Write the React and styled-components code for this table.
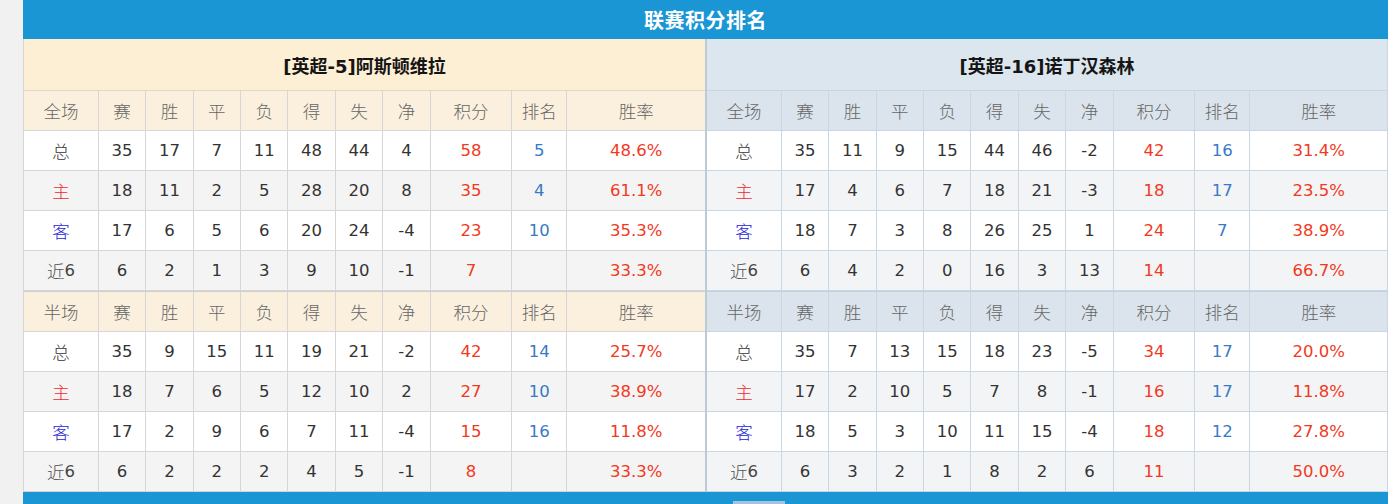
import React from "react";
import styled, { createGlobalStyle, css } from "styled-components";

const GlobalStyle = createGlobalStyle`
  html, body { margin: 0; padding: 0; }
  body {
    background: #f1f1f1;
    font-family: "DejaVu Sans", "Noto Sans CJK SC", sans-serif;
    color: #333;
  }
`;

const themes = {
  home: {
    team: "#fdefd4",
    teamLine: "#e2d8c6",
    head: "#fbf0de",
    stripe: "#f4f4f4",
    line: "#d6d6d6",
    sep: "#cfcfcf",
  },
  away: {
    team: "#dce6ee",
    teamLine: "#c9d5df",
    head: "#dbe4ec",
    stripe: "#f3f4f6",
    line: "#c8d7e3",
    sep: "#c3d0dc",
  },
};

const Page = styled.div`
  padding-left: 23px;
`;

const Panel = styled.div`
  width: 1365px;
  background: #fff;
`;

const TitleBar = styled.div`
  height: 39px;
  background: #1b96d5;
  color: #fff;
  display: flex;
  align-items: center;
  justify-content: center;
  font-family: "Noto Sans CJK SC", sans-serif;
  font-weight: 700;
  font-size: 20px;
  letter-spacing: 0.5px;
`;

const Halves = styled.div`
  display: flex;
`;

const Half = styled.div`
  flex: 1 1 0;
  min-width: 0;
  ${(p) =>
    p.$side === "home"
      ? css`border-left: 1px solid #d6d6d6;`
      : css`border-left: 2px solid #bccad6;`}
`;

const TeamTitle = styled.div`
  height: 52px;
  box-sizing: border-box;
  background: ${(p) => themes[p.$side].team};
  border-bottom: 1px solid ${(p) => themes[p.$side].teamLine};
  ${(p) => p.$side === "away" && css`border-right: 1px solid #c8d7e3;`}
  display: flex;
  align-items: center;
  justify-content: center;
  font-family: "DejaVu Sans", "Noto Sans CJK SC", sans-serif;
  font-weight: 700;
  font-size: 18px;
  color: #151515;
`;

const Section = styled.div`
  ${(p) => !p.$first && css`border-top: 1px solid ${themes[p.$side].sep};`}
`;

const Row = styled.div`
  display: grid;
  grid-template-columns: 75fr repeat(7, 47.5fr) 82fr 55fr 138fr;
  height: 40px;
  background: ${(p) =>
    p.$head ? themes[p.$side].head : p.$stripe ? themes[p.$side].stripe : "#fff"};
`;

const toneColors = {
  label: "#666",
  total: "#333",
  home: "#ee2a33",
  away: "#2323d8",
  recent: "#444",
  num: "#333",
  points: "#f2391d",
  rank: "#377ac6",
  rate: "#f2391d",
};

const Cell = styled.div`
  display: flex;
  align-items: center;
  justify-content: center;
  box-sizing: border-box;
  border-bottom: 1px solid ${(p) => themes[p.$side].line};
  border-right: 1px solid ${(p) => themes[p.$side].line};
  ${(p) => p.$last && p.$side === "home" && css`border-right: none;`}
  font-size: ${(p) => (p.$cjk ? "17.5px" : "16.5px")};
  font-family: ${(p) =>
    p.$cjk
      ? `"Noto Sans CJK SC", sans-serif`
      : `"DejaVu Sans", "Noto Sans CJK SC", sans-serif`};
  font-weight: ${(p) => (p.$cjk ? 300 : 400)};
  color: ${(p) => toneColors[p.$tone] || "#333"};
  white-space: nowrap;
`;

const Recent = styled.span`
  font-family: "DejaVu Sans", sans-serif;
  color: #444;
  font-weight: 400;
`;

const RecentChar = styled.span`
  font-family: "Noto Sans CJK SC", sans-serif;
  font-weight: 300;
  color: #555;
  font-size: 17.5px;
`;

const BottomBar = styled.div`
  height: 40px;
  background: #1b96d5;
  padding: 9px 0 0 710px;
  box-sizing: border-box;
`;

const Tab = styled.div`
  width: 52px;
  height: 24px;
  background: #a6c3d8;
`;

const heads = ["赛", "胜", "平", "负", "得", "失", "净", "积分", "排名", "胜率"];

const labelTone = { 总: "total", 主: "home", 客: "away", 近6: "recent" };

const teams = [
  {
    side: "home",
    name: "[英超-5]阿斯顿维拉",
    full: [
      ["总", 35, 17, 7, 11, 48, 44, 4, 58, 5, "48.6%"],
      ["主", 18, 11, 2, 5, 28, 20, 8, 35, 4, "61.1%"],
      ["客", 17, 6, 5, 6, 20, 24, -4, 23, 10, "35.3%"],
      ["近6", 6, 2, 1, 3, 9, 10, -1, 7, "", "33.3%"],
    ],
    half: [
      ["总", 35, 9, 15, 11, 19, 21, -2, 42, 14, "25.7%"],
      ["主", 18, 7, 6, 5, 12, 10, 2, 27, 10, "38.9%"],
      ["客", 17, 2, 9, 6, 7, 11, -4, 15, 16, "11.8%"],
      ["近6", 6, 2, 2, 2, 4, 5, -1, 8, "", "33.3%"],
    ],
  },
  {
    side: "away",
    name: "[英超-16]诺丁汉森林",
    full: [
      ["总", 35, 11, 9, 15, 44, 46, -2, 42, 16, "31.4%"],
      ["主", 17, 4, 6, 7, 18, 21, -3, 18, 17, "23.5%"],
      ["客", 18, 7, 3, 8, 26, 25, 1, 24, 7, "38.9%"],
      ["近6", 6, 4, 2, 0, 16, 3, 13, 14, "", "66.7%"],
    ],
    half: [
      ["总", 35, 7, 13, 15, 18, 23, -5, 34, 17, "20.0%"],
      ["主", 17, 2, 10, 5, 7, 8, -1, 16, 17, "11.8%"],
      ["客", 18, 5, 3, 10, 11, 15, -4, 18, 12, "27.8%"],
      ["近6", 6, 3, 2, 1, 8, 2, 6, 11, "", "50.0%"],
    ],
  },
];

function cellTone(i) {
  if (i === 8) return "points";
  if (i === 9) return "rank";
  if (i === 10) return "rate";
  return "num";
}

function StatBlock({ side, title, rows, first }) {
  return (
    <Section $side={side} $first={first}>
      <Row $side={side} $head>
        {[title, ...heads].map((h, i) => (
          <Cell key={i} $side={side} $cjk $tone="label" $last={i === 10}>
            {h}
          </Cell>
        ))}
      </Row>
      {rows.map((r, ri) => (
        <Row key={ri} $side={side} $stripe={ri % 2 === 1}>
          {r.map((v, i) => {
            if (i === 0) {
              if (v === "近6") {
                return (
                  <Cell key={i} $side={side} $tone="recent">
                    <RecentChar>近</RecentChar>
                    <Recent>6</Recent>
                  </Cell>
                );
              }
              return (
                <Cell key={i} $side={side} $cjk $tone={labelTone[v]}>
                  {v}
                </Cell>
              );
            }
            return (
              <Cell key={i} $side={side} $tone={cellTone(i)} $last={i === 10}>
                {v}
              </Cell>
            );
          })}
        </Row>
      ))}
    </Section>
  );
}

export default function App() {
  return (
    <>
      <GlobalStyle />
      <Page>
        <Panel>
          <TitleBar>联赛积分排名</TitleBar>
          <Halves>
            {teams.map((t) => (
              <Half key={t.side} $side={t.side}>
                <TeamTitle $side={t.side}>{t.name}</TeamTitle>
                <StatBlock side={t.side} title="全场" rows={t.full} first />
                <StatBlock side={t.side} title="半场" rows={t.half} />
              </Half>
            ))}
          </Halves>
          <BottomBar>
            <Tab />
          </BottomBar>
        </Panel>
      </Page>
    </>
  );
}
